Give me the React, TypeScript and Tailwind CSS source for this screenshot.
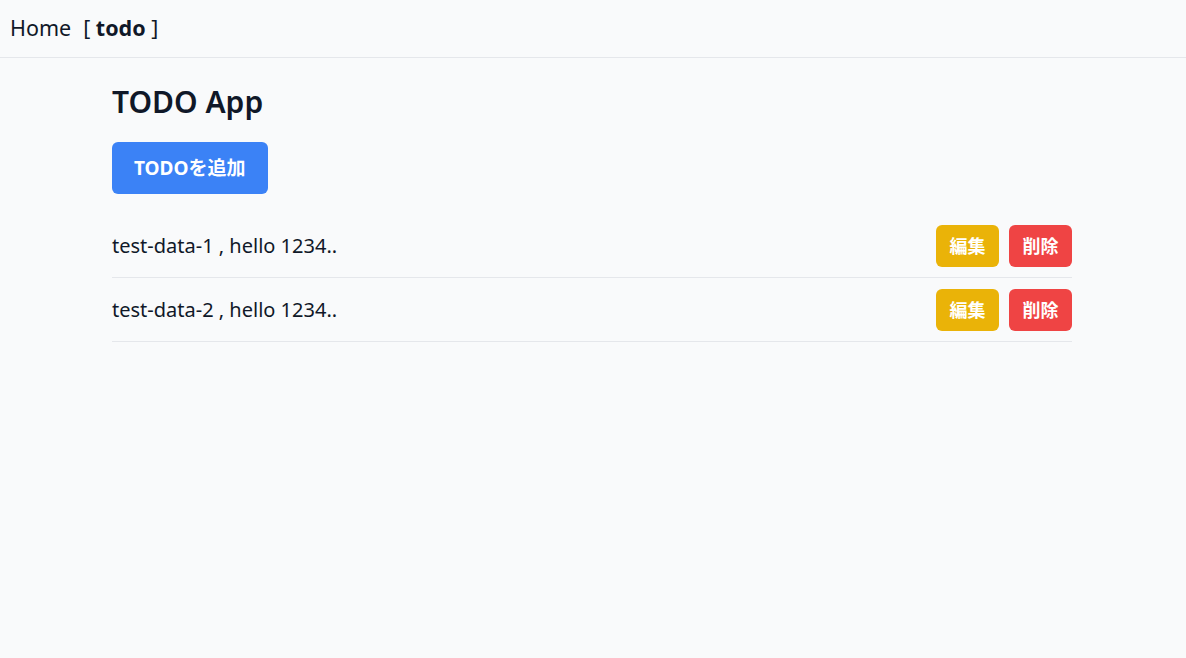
import React, { useState } from "react";

type Todo = {
  id: number;
  title: string;
  body: string;
};

const initialTodos: Todo[] = [
  { id: 1, title: "test-data-1", body: "hello 1234.." },
  { id: 2, title: "test-data-2", body: "hello 1234.." },
];

const App: React.FC = () => {
  const [todos, setTodos] = useState<Todo[]>(initialTodos);

  const handleDelete = (id: number) => {
    setTodos(todos.filter((t) => t.id !== id));
  };

  return (
    <div className="min-h-screen bg-gray-50 text-gray-900 font-['Noto_Sans','Noto_Sans_CJK_JP',sans-serif]">
      <nav className="h-[58px] border-b border-gray-200 flex items-center px-[10px] text-[21.5px]">
        <a href="#" className="mr-[12px]">
          Home
        </a>
        <span>
          [ <b className="font-bold">todo</b> ]
        </span>
      </nav>

      <div className="w-[960px] ml-[112px] pt-[22px]">
        <h1 className="text-3xl font-semibold leading-[44px]">TODO App</h1>

        <button className="mt-[18px] bg-[#3b82f6] text-white text-[19px] leading-7 font-bold px-[22px] py-3 rounded-md">
          TODOを追加
        </button>

        <ul className="mt-5">
          {todos.map((todo) => (
            <li
              key={todo.id}
              className="flex items-center justify-between border-b border-gray-200 pt-[11px] pb-[10px]"
            >
              <span className="text-xl">
                {todo.title} , {todo.body}
              </span>
              <div className="flex gap-[10px]">
                <button className="bg-[#eab308] text-white text-lg font-bold px-[13.5px] py-[7px] rounded-md">
                  編集
                </button>
                <button
                  onClick={() => handleDelete(todo.id)}
                  className="bg-[#ef4444] text-white text-lg font-bold px-[13.5px] py-[7px] rounded-md"
                >
                  削除
                </button>
              </div>
            </li>
          ))}
        </ul>
      </div>
    </div>
  );
};

export default App;
